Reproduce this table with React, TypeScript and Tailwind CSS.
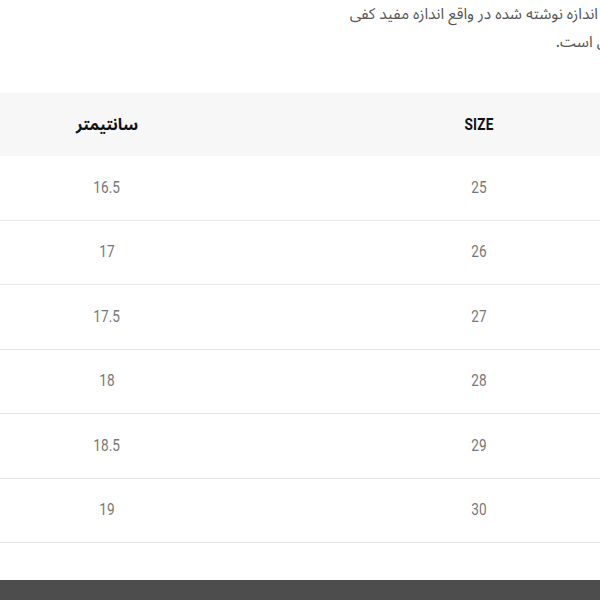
const rows = [
  { size: "25", cm: "16.5" },
  { size: "26", cm: "17" },
  { size: "27", cm: "17.5" },
  { size: "28", cm: "18" },
  { size: "29", cm: "18.5" },
  { size: "30", cm: "19" },
];

const faFont = { fontFamily: '"Noto Sans Arabic", "Vazirmatn", "DejaVu Sans", sans-serif' };
const numFont = { fontFamily: '"Roboto", "Liberation Sans", sans-serif' };

export default function App() {
  return (
    <div className="w-[600px] h-[600px] overflow-hidden bg-white flex flex-col">
      <div dir="rtl" className="flex flex-col text-[15.5px] leading-[28px] text-[#555]" style={faFont}>
        <p className="whitespace-nowrap mr-[2px] self-start">اندازه نوشته شده در واقع اندازه مفید کفی</p>
        <p className="whitespace-nowrap mr-[-33px] self-start">داخلی است.</p>
      </div>

      <div dir="rtl" className="w-[744px] ml-[-79px] mt-[37px]" style={numFont}>
        <div className="flex h-[63px] items-center bg-[#f7f7f7] text-[16px] font-bold text-[#111]">
          <div className="w-[372px] text-center">
            <span className="inline-block scale-x-[0.85] tracking-[0.2px]">SIZE</span>
          </div>
          <div className="w-[372px] text-center" style={faFont}>سانتیمتر</div>
        </div>
        {rows.map((r) => (
          <div key={r.size} className="flex h-[64.5px] items-center border-b border-[#e6e6e6] text-[16px] text-[#777]">
            <div className="w-[372px] text-center">
              <span className="inline-block scale-x-[0.85]">{r.size}</span>
            </div>
            <div className="w-[372px] text-center">
              <span className="inline-block scale-x-[0.85]">{r.cm}</span>
            </div>
          </div>
        ))}
      </div>

      <div className="mt-auto h-[20px] bg-[#4d4d4d]" />
    </div>
  );
}
